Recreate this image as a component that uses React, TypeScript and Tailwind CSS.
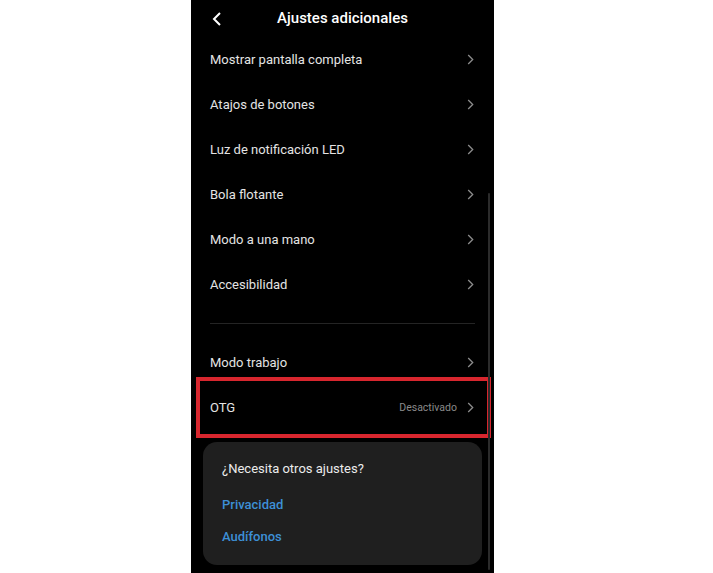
const ROWS = [
  'Mostrar pantalla completa',
  'Atajos de botones',
  'Luz de notificación LED',
  'Bola flotante',
  'Modo a una mano',
  'Accesibilidad',
];

const Chevron = () => (
  <svg width="7" height="11" viewBox="0 0 7 11" className="mr-[1px]">
    <path d="M1.2 1 L5.7 5.5 L1.2 10" fill="none" stroke="#8c8c8c" strokeWidth="1.3" />
  </svg>
);

const Row = ({ label, value }: { label: string; value?: string }) => (
  <div className="h-[45px] flex items-center justify-between">
    <span className="text-[13px] text-[#e4e4e4]">{label}</span>
    <div className="flex items-center gap-[10px]">
      {value && <span className="text-[10.5px] text-[#8a8a8a]">{value}</span>}
      <Chevron />
    </div>
  </div>
);

const App = () => {
  return (
    <div
      className="w-[713px] h-[573px] bg-white pl-[191px] overflow-hidden"
      style={{ fontFamily: 'Roboto, "Noto Sans", sans-serif' }}
    >
      <div className="w-[303px] h-[573px] bg-black relative px-[19px]">
        <div className="h-[37px] flex items-center relative">
          <svg width="10" height="14" viewBox="0 0 10 14" className="ml-[2px]">
            <path d="M8 1 L2 7 L8 13" fill="none" stroke="white" strokeWidth="2" />
          </svg>
          <span className="absolute left-0 right-0 text-center text-[15px] font-medium text-white">
            Ajustes adicionales
          </span>
        </div>

        {ROWS.map((r) => (
          <Row key={r} label={r} />
        ))}

        <div className="mt-[16px] mb-[16px] h-px bg-[#242424]" />

        <Row label="Modo trabajo" />
        <Row label="OTG" value="Desactivado" />

        <div className="mt-[12px] -mx-[7px] h-[123px] rounded-[14px] bg-[#1f1f1f] px-[19px] flex flex-col">
          <span className="mt-[17px] text-[13px] text-[#ececec]">¿Necesita otros ajustes?</span>
          <span className="mt-[16px] text-[13px] font-medium text-[#3d8fd6]">Privacidad</span>
          <span className="mt-[13px] text-[13px] font-medium text-[#3d8fd6]">Audífonos</span>
        </div>

        {/* highlight around OTG */}
        <div className="absolute left-[5px] top-[377px] w-[295px] h-[61px] border-4 border-[#d7262e]" />

        {/* scrollbar */}
        <div className="absolute right-[4px] top-[193px] bottom-[3px] w-[2px] rounded bg-[#2b2b2b]" />
      </div>
    </div>
  );
};

export default App;
